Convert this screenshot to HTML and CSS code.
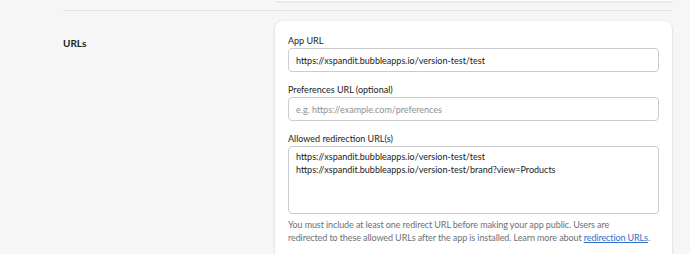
FILE: index.html
```html
<!doctype html>
<html lang="en">

<head>
  <title>App setup</title>
  <link rel="stylesheet" href="styles.css">
</head>

<body>
  <div class="page">
    <div class="section prev">
      <div class="section-title"></div>
      <div class="card card-end"></div>
    </div>
    <hr class="divider">
    <div class="section">
      <h2 class="section-title">URLs</h2>
      <div class="card">
        <div class="field">
          <label for="appUrl">App URL</label>
          <input type="text" id="appUrl" value="https://xspandit.bubbleapps.io/version-test/test">
        </div>
        <div class="field">
          <label for="prefUrl">Preferences URL (optional)</label>
          <input type="text" id="prefUrl" placeholder="e.g. https://example.com/preferences">
        </div>
        <div class="field">
          <label for="redirects">Allowed redirection URL(s)</label>
          <textarea id="redirects" rows="4">https://xspandit.bubbleapps.io/version-test/test
https://xspandit.bubbleapps.io/version-test/brand?view=Products</textarea>
          <p class="help">You must include at least one redirect URL before making your app public. Users are<br>
            redirected to these allowed URLs after the app is installed. Learn more about <a href="#">redirection URLs</a>.</p>
        </div>
      </div>
    </div>
  </div>
</body>

</html>
```

FILE: styles.css
```css
body {
  margin: 0;
  background-color: #f6f6f7;
  font-family: "Lato", "Open Sans", sans-serif;
  color: #202223;
  overflow: hidden;
}

.page {
  padding: 0 18px 0 63px;
}

.section {
  display: grid;
  grid-template-columns: 212px 1fr;
}

.section-title {
  margin: 0;
  padding-top: 15px;
  font-size: 10px;
  font-weight: bold;
  line-height: 14px;
}

.prev .section-title {
  padding: 0;
}

.card {
  background-color: #fff;
  border-radius: 8px;
  box-shadow: 0 0 3px rgba(23, 24, 24, 0.08), 0 1px 2px rgba(0, 0, 0, 0.12);
  padding: 13px 13px 20px;
}

.card-end {
  height: 1px;
  padding: 0;
  border-radius: 0 0 8px 8px;
}

.divider {
  border: none;
  border-top: 1px solid #e4e5e7;
  margin: 9px 0 10px;
}

.field {
  margin-bottom: 11px;
}

.field label {
  display: block;
  font-size: 9px;
  line-height: 13px;
  margin-bottom: 1px;
}

.field input,
.field textarea {
  display: block;
  box-sizing: border-box;
  width: 100%;
  margin: 0;
  padding: 0 7px;
  border: 1px solid #c9cccf;
  border-radius: 4px;
  font-family: inherit;
  font-size: 9px;
  color: #202223;
}

.field input {
  height: 24px;
}

.field textarea {
  height: 68px;
  padding-top: 3px;
  line-height: 13px;
  resize: none;
}

.field input::placeholder {
  color: #8c9196;
}

.help {
  margin: 4px 0 0;
  font-size: 9px;
  line-height: 13px;
  letter-spacing: -0.1px;
  white-space: nowrap;
  color: #6d7175;
}

.help a {
  color: #2c6ecb;
}
```
